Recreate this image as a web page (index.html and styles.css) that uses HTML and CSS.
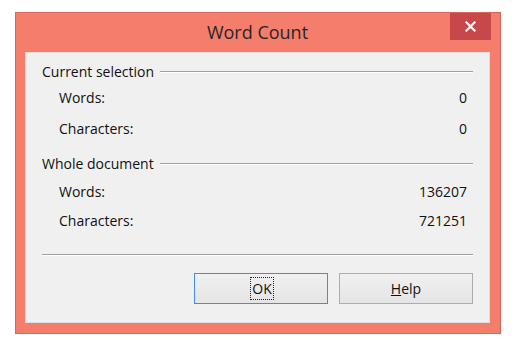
FILE: index.html
```html
<!DOCTYPE html>
<html>
<head>
<meta charset="utf-8">
<link rel="stylesheet" href="styles.css">
</head>
<body>
<div class="window">
  <div class="titlebar">
    <div class="title">Word Count</div>
    <div class="close">
      <svg width="11" height="11" viewBox="0 0 11 11"><path d="M1.5 1.5 L9.5 9.5 M9.5 1.5 L1.5 9.5" stroke="#fff" stroke-width="2.2" stroke-linecap="square"/></svg>
    </div>
  </div>
  <div class="content">
    <div class="group-head g1"><span>Current selection</span><div class="rule"></div></div>
    <div class="row r1"><span>Words:</span><span class="val">0</span></div>
    <div class="row r2"><span>Characters:</span><span class="val">0</span></div>
    <div class="group-head g2"><span>Whole document</span><div class="rule"></div></div>
    <div class="row r3"><span>Words:</span><span class="val">136207</span></div>
    <div class="row r4"><span>Characters:</span><span class="val">721251</span></div>
    <div class="sep"></div>
    <div class="buttons">
      <div class="btn btn-ok"><span class="focus">OK</span></div>
      <div class="btn"><span><u>H</u>elp</span></div>
    </div>
  </div>
</div>
</body>
</html>
```

FILE: styles.css
```css
* { box-sizing: border-box; }
html, body { margin: 0; padding: 0; background: #ffffff; }
body { font-family: "Open Sans", "Noto Sans", sans-serif; color: #111111; }

.window {
  margin: 12px 0 0 15px;
  width: 486px;
  height: 322px;
  background: #f47d6c;
  border: 1px solid #d4695b;
  padding: 0 10px 10px 9px;
  display: flex;
  flex-direction: column;
}
.titlebar {
  position: relative;
  height: 39px;
  flex: none;
}
.title {
  text-align: center;
  font-size: 18px;
  line-height: 38px;
  color: #2a2626;
  padding-left: 0;
}
.close {
  position: absolute;
  top: 0;
  right: -1px;
  width: 41px;
  height: 27px;
  background: #c7474a;
  display: flex;
  align-items: center;
  justify-content: center;
}
.content {
  flex: 1;
  background: #f0f0f0;
  border: 1px solid #e2dcdc;
  padding: 0 16px 0 16px;
  font-size: 14px;
}
.group-head {
  display: flex;
  align-items: center;
  height: 20px;
  line-height: 20px;
}
.group-head span { white-space: nowrap; }
.rule {
  flex: 1;
  margin-left: 6px;
  border-top: 1px solid #a0a0a0;
  border-bottom: 1px solid #ffffff;
  margin-top: -1px;
}
.g1 { margin-top: 9px; }
.g2 { margin-top: 15px; }
.row {
  display: flex;
  justify-content: space-between;
  height: 20px;
  line-height: 20px;
  padding-left: 17px;
  padding-right: 6px;
}
.r1 { margin-top: 6px; }
.r2 { margin-top: 11px; }
.r3 { margin-top: 8px; }
.r4 { margin-top: 9px; }
.sep {
  margin-top: 23px;
  border-top: 1px solid #a0a0a0;
  border-bottom: 1px solid #ffffff;
}
.buttons {
  display: flex;
  justify-content: flex-end;
  gap: 11px;
  margin-top: 17px;
}
.btn {
  width: 134px;
  height: 31px;
  border: 1px solid #adadad;
  background: linear-gradient(#f0f0f0, #e5e5e5);
  display: flex;
  align-items: center;
  justify-content: center;
  font-size: 14px;
  color: #111;
}
.btn-ok {
  border-color: #3d8ee8;
  padding-left: 2px;
}
.focus {
  border: 1px dotted #222;
  padding: 0 1px;
  line-height: 21px;
}
```
